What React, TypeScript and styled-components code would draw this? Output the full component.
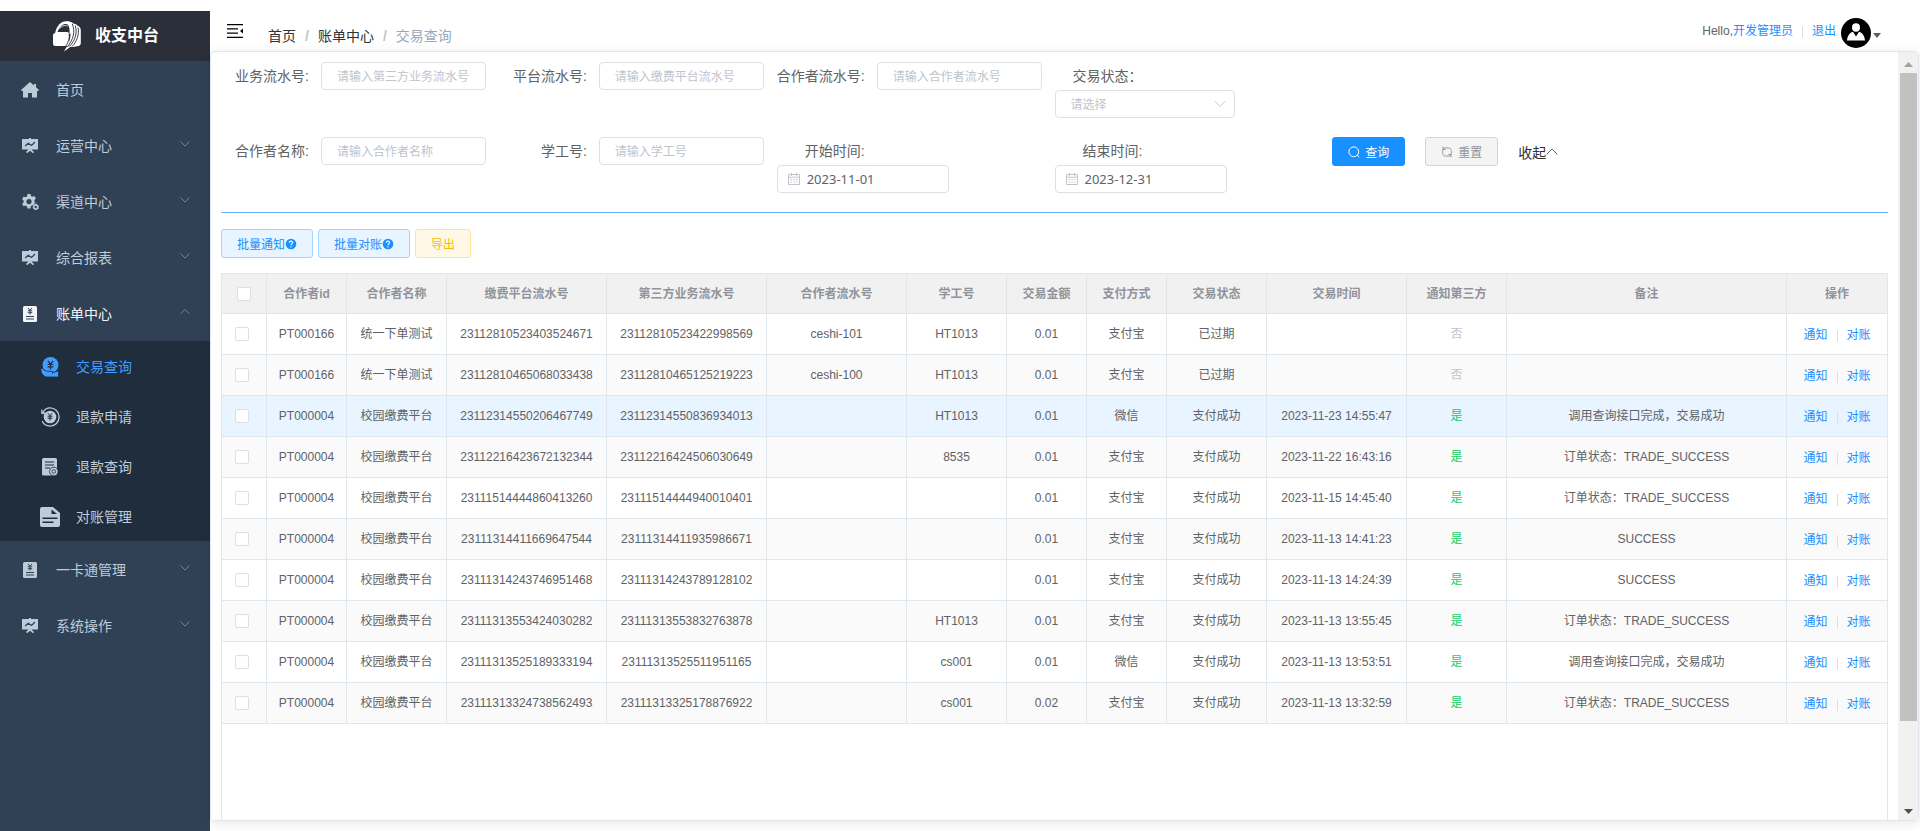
import React, { useState } from 'react';
import styled, { createGlobalStyle, css } from 'styled-components';

const latinFirst = `"Liberation Sans", "Noto Sans CJK SC", sans-serif`;
const uiFont = `"Noto Sans", "Noto Sans CJK SC", sans-serif`;

const GlobalStyle = createGlobalStyle`
  *, *::before, *::after { box-sizing: border-box; }
  body {
    margin: 0;
    background: #fff;
    color: #606266;
    font: 14px/20px ${latinFirst};
  }
  button, input, select { font-family: inherit; }
  a { text-decoration: none; }
`;

/* ---------- shell ---------- */

const Shell = styled.div`
  display: flex;
  height: 100vh;
  padding-top: 11px;
`;

const Sidebar = styled.aside`
  flex: 0 0 210px;
  background: #304156;
  overflow: hidden;
`;

const Brand = styled.div`
  display: flex;
  align-items: center;
  gap: 12px;
  height: 50px;
  padding-left: 53px;
  background: #2b2f3a;
  color: #fff;
  font-size: 16px;
  font-weight: bold;
`;

const Menu = styled.ul`
  margin: 0;
  padding: 0;
  list-style: none;
`;

const SubMenu = styled(Menu)`
  background: #1f2d3d;
`;

const MenuLink = styled.a<{ $nested?: boolean; $tone?: string }>`
  display: flex;
  align-items: center;
  height: ${p => (p.$nested ? 50 : 56)}px;
  padding: 2px 20px 0 ${p => (p.$nested ? 40 : 20)}px;
  color: ${p => p.$tone ?? '#bfcbd9'};
  font-size: 14px;
  & > svg { margin-bottom: 4px; }
`;

const MenuIcon = styled.span`
  display: flex;
  align-items: center;
  justify-content: center;
  width: 20px;
  margin-right: 16px;
`;

const MenuText = styled.span`
  flex: 1;
`;

const Main = styled.div`
  flex: 1;
  min-width: 0;
  display: flex;
  flex-direction: column;
  padding: 0 1px 10px 0;
`;

const Header = styled.header`
  flex: 0 0 40px;
  display: flex;
  align-items: center;
  padding-left: 17px;
`;

const IconButton = styled.button`
  display: flex;
  margin: 0;
  padding: 0;
  border: 0;
  background: none;
  color: #000;
  cursor: pointer;
`;

const Crumbs = styled.nav`
  display: flex;
  margin: 10px 0 0 25px;
`;

const Crumb = styled.a<{ $current?: boolean }>`
  color: ${p => (p.$current ? '#97a8be' : '#303133')};
  &:not(:first-child)::before {
    content: '/';
    margin: 0 9px;
    color: #c0c4cc;
    font-weight: bold;
  }
`;

const Account = styled.div`
  display: flex;
  align-items: center;
  margin-left: auto;
  padding-right: 38px;
  font-size: 12px;
`;

const TextLink = styled.a`
  color: #1890ff;
`;

const Bar = styled.span`
  width: 1px;
  height: 12px;
  margin: 2px 9px 0;
  background: #dcdfe6;
`;

const AvatarMenu = styled(IconButton)`
  align-items: center;
  gap: 2px;
  margin: 4px 0 0 5px;
  & > svg:last-child { margin-top: 4px; }
`;

/* ---------- content card ---------- */

const Card = styled.main`
  flex: 1;
  min-height: 0;
  display: flex;
  border: 1px solid #dfe6f0;
  border-radius: 4px;
  box-shadow: 0 2px 12px rgba(0, 0, 0, 0.1);
  overflow: hidden;
`;

const Page = styled.div`
  flex: 1;
  min-width: 0;
  display: flex;
  flex-direction: column;
  padding: 10px 10px 0;
  overflow: hidden;
`;

const ScrollTrack = styled.div`
  flex: 0 0 20px;
  display: flex;
  flex-direction: column;
  align-items: center;
  background: #f1f1f1;
`;

const ScrollArrow = styled.span`
  flex: 0 0 21px;
  display: flex;
  align-items: center;
  padding-top: 3px;
`;

const ScrollThumb = styled.span`
  flex: 649 0 0;
  width: 17px;
  background: #c1c1c1;
`;

const ScrollRest = styled.span`
  flex: 78 0 0;
`;

/* ---------- filter form ---------- */

const Filters = styled.form`
  display: grid;
  grid-template-columns: repeat(6, 1fr);
  row-gap: 19px;
  padding-bottom: 19px;
  border-bottom: 1px solid #66b1ff;
`;

const Field = styled.div<{ $stacked?: boolean }>`
  display: flex;
  flex-direction: ${p => (p.$stacked ? 'column' : 'row')};
  align-items: flex-start;
  height: 56px;
`;

const FieldLabel = styled.label`
  flex: none;
  width: 100px;
  height: 28px;
  padding-right: 12px;
  text-align: right;
  white-space: nowrap;
  line-height: 28px;
`;

const controlBox = css`
  height: 28px;
  border: 1px solid #dcdfe6;
  border-radius: 4px;
  background: #fff;
  color: #606266;
`;

const TextInput = styled.input`
  ${controlBox}
  width: 165px;
  padding: 2px 15px 0;
  font-size: 12px;
  &::placeholder { color: #c0c4cc; }
`;

const SelectWrap = styled.div`
  display: grid;
  align-items: center;
  width: 180px;
  & > * { grid-area: 1 / 1; }
  & > svg { justify-self: end; margin-right: 9px; pointer-events: none; }
`;

const SelectInput = styled.select`
  ${controlBox}
  width: 100%;
  padding: 2px 15px 0;
  color: #c0c4cc;
  font-size: 12px;
  appearance: none;
`;

const DateWrap = styled.div`
  ${controlBox}
  display: flex;
  align-items: center;
  gap: 7px;
  width: 172px;
  padding: 0 10px;
`;

const DateInput = styled.input`
  flex: 1;
  min-width: 0;
  padding: 0;
  border: 0;
  outline: 0;
  background: none;
  color: #606266;
  font-size: 13px;
  font-family: ${uiFont};
`;

const FormActions = styled.div`
  grid-column: span 2;
  display: flex;
  align-items: flex-start;
`;

const tones = {
  primary: ['#1890ff', '#1890ff', '#fff'],
  info: ['#f4f4f5', '#d3d4d6', '#909399'],
  soft: ['#e8f4ff', '#a3d3ff', '#1890ff'],
  warning: ['#fff8e6', '#ffe399', '#ffba00'],
};

const Button = styled.button<{ $tone: keyof typeof tones }>`
  display: inline-flex;
  align-items: center;
  gap: 5px;
  height: 29px;
  padding: 0 15px;
  border: 1px solid ${p => tones[p.$tone][1]};
  border-radius: 3px;
  background: ${p => tones[p.$tone][0]};
  color: ${p => tones[p.$tone][2]};
  font-size: 12px;
  white-space: nowrap;
  cursor: pointer;
`;

const TightButton = styled(Button)`
  gap: 0;
`;

const ResetButton = styled(Button)`
  margin: 0 20px;
`;

const Collapse = styled(IconButton)`
  align-items: center;
  height: 29px;
  color: #303133;
  font-size: 14px;
`;

const Toolbar = styled.div`
  display: flex;
  gap: 5px;
  padding: 16px 0 15px;
`;

/* ---------- table ---------- */

const TableFrame = styled.div`
  flex: 1;
  min-height: 0;
  border: solid #dfe6ec;
  border-width: 1px 1px 0;
  overflow: hidden;
`;

const Table = styled.table`
  width: 100%;
  table-layout: fixed;
  border-collapse: separate;
  border-spacing: 0;
  font-size: 12px;
  text-align: center;
`;

const cell = css`
  padding: 0;
  border: solid #dfe6ec;
  border-width: 0 1px 1px 0;
  white-space: nowrap;
  &:last-child { border-right: 0; }
`;

const Th = styled.th`
  ${cell}
  height: 40px;
  background: #f1f1f1;
  color: #909399;
`;

const Td = styled.td`
  ${cell}
  height: 41px;
`;

const Tr = styled.tr<{ $active?: boolean }>`
  background: #fff;
  &:nth-child(even) { background: #fafafa; }
  ${p => p.$active && css`&& { background: #e8f4ff; }`}
`;

const Check = styled.input`
  display: block;
  width: 14px;
  height: 14px;
  margin: 0 auto;
  border: 1px solid #dcdfe6;
  border-radius: 2px;
  background: #fff;
  appearance: none;
  &:checked { background: #1890ff; }
`;

const CheckCell = styled(Td)`
  padding-right: 4px;
`;

const Flag = styled.span<{ $on: boolean }>`
  color: ${p => (p.$on ? '#13ce66' : '#c0c4cc')};
`;

const RowActions = styled.div`
  display: flex;
  align-items: center;
  justify-content: center;
  padding-top: 2px;
`;

/* ---------- icons ---------- */

const Logo = () => (
  <svg width="30" height="32" viewBox="0 0 30 32" fill="none">
    <path d="M2 13C4 5 8 1.500 13 1.200c4-.2 7 2.500 7.500 7.800L17 14z" fill="#fff" />
    <path d="M4.500 12C7 6 10 3.800 13 4c3 .3 4 4 3.500 10.500C16 12.500 15 12 13.500 12z" fill="#2b2f3a" />
    <path d="M7 8.500C9 5.500 12 5 14.500 6" stroke="#fff" strokeWidth="0.900" />
    <path d="M0 15.500A2.500 2.500 0 0 1 2.500 13H13q3 0 3 3v10H2.500A2.500 2.500 0 0 1 0 23.500z" fill="#fff" />
    <path d="M14 1.300c3 0 5 1 6 2.200 2.500 0 4 1.200 4.500 2.300 2 .6 3 2 3.300 4V23c0 2-1 3-4 3.300-3 .8-5 .8-6.500.8L11 31.500c4-6.500 7-12.500 6.500-19.500C17 6 16 4 13 3z" fill="#fff" />
    <path d="M16.500 14c0 5-1.500 9-3.500 12M19.300 4c3 7 1.500 15-5 23M22.300 5.500c2.200 7.500 0 15-6 21M25 7.500c1.400 7-1 14-6 19" stroke="#2b2f3a" strokeWidth="0.900" />
  </svg>
);

const HomeIcon = () => (
  <svg width="18" height="16" viewBox="0 0 18 16" fill="currentColor">
    <path d="M9 0 0 8l.8 1H2v6.500h5V11h4v4.500h5V9h1.200L18 8l-3-2.700V2h-2v1.600z" />
  </svg>
);

const BoardIcon = () => (
  <svg width="16" height="16" viewBox="0 0 16 16" fill="none">
    <path d="M7 0h2v1h7v10.500H9.500l2.500 2.500-1 1.200-3-2.400-3 2.400L4 14l2.500-2.500H0V1h7z" fill="currentColor" />
    <path d="m3 8 3.200-2.700L9.500 7.500 13 4" stroke="#304156" strokeWidth="1.200" />
  </svg>
);

const GearIcon = () => (
  <svg width="17" height="16" viewBox="0 0 17 16" fill="currentColor" fillRule="evenodd">
    <path d="M5.500 0h3l.4 2 1.500.8 2-.7 1.500 2.500-1.500 1.400v1.800l1 .9-1.500 1.100-.2 1.700-1.400-.2-1.400.7-.4 2.500h-3l-.5-2.100-1.400-.8-2 .6L.1 9.800 1.600 8.400V6.600L.1 5.200 1.600 2.600l2 .6L5 2.400zM7 5a2.600 2.600 0 1 0 0 5.200A2.600 2.600 0 0 0 7 5z" />
    <path d="M13 9.800h1.800l.3 1 1 .1.900 1.500-.6.700.4.800-.9 1.500-1.100-.1-.6.700h-1.500l-.5-1-1-.2-.6-1.500.7-.8-.2-1 1-1.300 1 .2zm.7 2a1.200 1.200 0 1 0 0 2.400 1.200 1.200 0 0 0 0-2.400z" />
  </svg>
);

const BillIcon = () => (
  <svg width="14" height="16" viewBox="0 0 14 16" fill="none">
    <rect width="14" height="16" rx="1.500" fill="currentColor" />
    <path d="m5 2 2 2.300L9 2M7 4.300V8.500M4.800 4.800h4.400M4.800 6.700h4.400M3 10.500h8M3 13h8" stroke="#304156" strokeWidth="1" />
  </svg>
);

const HandCoinIcon = () => (
  <svg width="20" height="20" viewBox="0 0 20 20" fill="none">
    <circle cx="10.500" cy="8" r="8" fill="currentColor" />
    <path d="m7.800 3.800 2.700 3.400 2.700-3.400M10.500 7v5.500M7.600 7.500h5.800M7.600 9.900h5.800" stroke="#1f2d3d" strokeWidth="1.200" />
    <path d="M.8 11.500c1.200-.6 2.200.2 3.200 1.600l3.400 1.200H12c1.500 0 1.500 1.600 0 1.800l6.500-2.400V20H8C4 20 1 17.500.8 11.500z" fill="currentColor" stroke="#1f2d3d" strokeWidth="0.800" />
  </svg>
);

const RefundIcon = () => (
  <svg width="20" height="20" viewBox="0 0 20 20" fill="none">
    <circle cx="10" cy="10" r="6.300" fill="currentColor" />
    <path d="M1.500 6.500 5 6M2.800 5.500C4.500 2.500 7 .9 10 .9a9.100 9.100 0 0 1 0 18.200c-3.700 0-6.500-2-7.800-5M1.800 2.500v4" stroke="currentColor" strokeWidth="1.300" />
    <path d="m7.900 6.200 2.100 2.400 2.100-2.400M10 8.500v5M7.600 9.200h4.800M7.600 11.200h4.800" stroke="#1f2d3d" strokeWidth="1" />
  </svg>
);

const ReceiptIcon = () => (
  <svg width="18" height="18" viewBox="0 0 18 18" fill="none">
    <rect x="1" width="15" height="17.500" rx="1.500" fill="currentColor" />
    <path d="M4 4h9M4 7h9M4 10h5" stroke="#1f2d3d" strokeWidth="1" />
    <circle cx="12.800" cy="13.500" r="4.300" fill="currentColor" stroke="#1f2d3d" strokeWidth="0.800" />
    <circle cx="12.800" cy="13.500" r="1.800" stroke="#1f2d3d" strokeWidth="0.800" />
  </svg>
);

const DocumentIcon = () => (
  <svg width="20" height="20" viewBox="0 0 20 20" fill="none">
    <path d="M2 0h11l7 6v12a2 2 0 0 1-2 2H2a2 2 0 0 1-2-2V2a2 2 0 0 1 2-2z" fill="currentColor" />
    <path d="M11.500 2.500V7H17z" fill="#1f2d3d" />
    <path d="M2.500 11.200h15M2.500 15.300h11" stroke="#1f2d3d" strokeWidth="1.600" />
  </svg>
);

const Chevron = ({ up, color = '#909399', size = 10 }: { up?: boolean; color?: string; size?: number }) => (
  <svg width={size} height={size} viewBox="0 0 10 10" fill="none" stroke={color} strokeWidth="0.800">
    <path d={up ? 'M.5 7 5 2.500 9.500 7' : 'M.5 2.500 5 7l4.500-4.500'} />
  </svg>
);

const FoldIcon = () => (
  <svg width="16" height="14" viewBox="0 0 16 14" fill="currentColor">
    <path d="M0 0h16v1.300H0zM0 4.200h11v1.300H0zM0 8.400h11v1.300H0zM0 12.700h16V14H0zM16 4.500v5L13 7z" />
  </svg>
);

const Avatar = () => (
  <svg width="30" height="30" viewBox="0 0 30 30">
    <circle cx="15" cy="15" r="15" fill="#000" />
    <ellipse cx="15" cy="9.500" rx="4" ry="4.200" fill="#fff" />
    <path d="M6 22.500c.5-4.500 2.500-8 6-8.700l3 4.700 3-4.700c3.500.7 5.500 4.200 6 8.700z" fill="#fff" />
  </svg>
);

const Triangle = ({ up, color, width = 9 }: { up?: boolean; color: string; width?: number }) => (
  <svg width={width} height="5" viewBox="0 0 9 5" preserveAspectRatio="none" fill={color}>
    <path d={up ? 'M0 5 4.500 0 9 5z' : 'M0 0h9L4.500 5z'} />
  </svg>
);

const SearchIcon = () => (
  <svg width="12" height="12" viewBox="0 0 12 12" fill="none" stroke="currentColor">
    <circle cx="5.800" cy="5.800" r="4.900" />
    <path d="m9.200 9.200 2 2" />
  </svg>
);

const RefreshIcon = () => (
  <svg width="12" height="12" viewBox="0 0 12 12" fill="none" stroke="currentColor" strokeWidth="0.900">
    <path d="M1.700 7.500V4.500C1.700 3 2.500 2 4 1.900h3.500c1.700.1 2.600 1 2.700 2.600M10.300 5v2.500c0 1.500-.8 2.500-2.300 2.600H4.500C2.900 10 2 9.200 1.800 7.800M2 .8v2.700h2.700M10 11.200V8.500H7.300" />
  </svg>
);

const HelpIcon = () => (
  <svg width="12" height="12" viewBox="0 0 12 12" fill="none">
    <circle cx="6" cy="6" r="5.300" fill="currentColor" />
    <path d="M4.300 4.700C4.300 2.600 7.700 2.600 7.700 4.600 7.700 5.800 6 5.800 6 7.200M6 8.200v1.200" stroke="#fff" strokeWidth="1.100" />
  </svg>
);

const CalendarIcon = () => (
  <svg width="12" height="12" viewBox="0 0 12 12" fill="none" stroke="#c0c4cc">
    <path d="M.5 1.500h11v10H.5zM.5 4.200h11M3.500 0v3M8.500 0v3M2.500 6.500h1.500M5.300 6.500h1.500M8 6.500h1.500M2.500 9h1.500M5.300 9h1.500M8 9h1.500" />
  </svg>
);

/* ---------- data ---------- */

type Item = { text: string; icon: React.ReactNode; arrow?: 'up' | 'down'; tone?: string; children?: Item[] };

const menu: Item[] = [
  { text: '首页', icon: <HomeIcon /> },
  { text: '运营中心', icon: <BoardIcon />, arrow: 'down' },
  { text: '渠道中心', icon: <GearIcon />, arrow: 'down' },
  { text: '综合报表', icon: <BoardIcon />, arrow: 'down' },
  {
    text: '账单中心', icon: <BillIcon />, arrow: 'up', tone: '#f4f4f5',
    children: [
      { text: '交易查询', icon: <HandCoinIcon />, tone: '#409eff' },
      { text: '退款申请', icon: <RefundIcon /> },
      { text: '退款查询', icon: <ReceiptIcon /> },
      { text: '对账管理', icon: <DocumentIcon /> },
    ],
  },
  { text: '一卡通管理', icon: <BillIcon />, arrow: 'down' },
  { text: '系统操作', icon: <BoardIcon />, arrow: 'down' },
];

const columns: [string, number?][] = [
  ['合作者id', 80], ['合作者名称', 100], ['缴费平台流水号', 160], ['第三方业务流水号', 160],
  ['合作者流水号', 140], ['学工号', 100], ['交易金额', 80], ['支付方式', 80], ['交易状态', 100],
  ['交易时间', 140], ['通知第三方', 100], ['备注'], ['操作', 100],
];

const TRADE = '订单状态：TRADE_SUCCESS';
const DONE = '调用查询接口完成，交易成功';
const TEST = '统一下单测试';
const CAMPUS = '校园缴费平台';

const rows: string[][] = [
  ['PT000166', TEST, '23112810523403524671', '23112810523422998569', 'ceshi-101', 'HT1013', '0.01', '支付宝', '已过期', '', '否', ''],
  ['PT000166', TEST, '23112810465068033438', '23112810465125219223', 'ceshi-100', 'HT1013', '0.01', '支付宝', '已过期', '', '否', ''],
  ['PT000004', CAMPUS, '23112314550206467749', '23112314550836934013', '', 'HT1013', '0.01', '微信', '支付成功', '2023-11-23 14:55:47', '是', DONE],
  ['PT000004', CAMPUS, '23112216423672132344', '23112216424506030649', '', '8535', '0.01', '支付宝', '支付成功', '2023-11-22 16:43:16', '是', TRADE],
  ['PT000004', CAMPUS, '23111514444860413260', '23111514444940010401', '', '', '0.01', '支付宝', '支付成功', '2023-11-15 14:45:40', '是', TRADE],
  ['PT000004', CAMPUS, '23111314411669647544', '23111314411935986671', '', '', '0.01', '支付宝', '支付成功', '2023-11-13 14:41:23', '是', 'SUCCESS'],
  ['PT000004', CAMPUS, '23111314243746951468', '23111314243789128102', '', '', '0.01', '支付宝', '支付成功', '2023-11-13 14:24:39', '是', 'SUCCESS'],
  ['PT000004', CAMPUS, '23111313553424030282', '23111313553832763878', '', 'HT1013', '0.01', '支付宝', '支付成功', '2023-11-13 13:55:45', '是', TRADE],
  ['PT000004', CAMPUS, '23111313525189333194', '23111313525511951165', '', 'cs001', '0.01', '微信', '支付成功', '2023-11-13 13:53:51', '是', DONE],
  ['PT000004', CAMPUS, '23111313324738562493', '23111313325178876922', '', 'cs001', '0.02', '支付宝', '支付成功', '2023-11-13 13:32:59', '是', TRADE],
];

/* ---------- parts ---------- */

const MenuList = ({ items, nested }: { items: Item[]; nested?: boolean }) => (
  <>
    {items.map(item => (
      <li key={item.text}>
        <MenuLink href="#" $nested={nested} $tone={item.tone}>
          <MenuIcon>{item.icon}</MenuIcon>
          <MenuText>{item.text}</MenuText>
          {item.arrow && <Chevron up={item.arrow === 'up'} />}
        </MenuLink>
        {item.children && <SubMenu><MenuList items={item.children} nested /></SubMenu>}
      </li>
    ))}
  </>
);

const TextField = ({ id, label, hint }: { id: string; label: string; hint: string }) => (
  <Field>
    <FieldLabel htmlFor={id}>{label}</FieldLabel>
    <TextInput id={id} placeholder={hint} />
  </Field>
);

const DateField = ({ id, label, value }: { id: string; label: string; value: string }) => {
  const [date, setDate] = useState(value);
  return (
    <Field $stacked>
      <FieldLabel htmlFor={id}>{label}</FieldLabel>
      <DateWrap>
        <CalendarIcon />
        <DateInput id={id} value={date} onChange={e => setDate(e.target.value)} />
      </DateWrap>
    </Field>
  );
};

export default function App() {
  return (
    <>
      <GlobalStyle />
      <Shell>
        <Sidebar>
          <Brand><Logo />收支中台</Brand>
          <Menu><MenuList items={menu} /></Menu>
        </Sidebar>
        <Main>
          <Header>
            <IconButton aria-label="折叠菜单"><FoldIcon /></IconButton>
            <Crumbs>
              <Crumb href="#">首页</Crumb>
              <Crumb href="#">账单中心</Crumb>
              <Crumb href="#" $current>交易查询</Crumb>
            </Crumbs>
            <Account>
              Hello,<TextLink href="#">开发管理员</TextLink>
              <Bar />
              <TextLink href="#">退出</TextLink>
              <AvatarMenu aria-label="账户菜单"><Avatar /><Triangle color="#5a5e66" width={8} /></AvatarMenu>
            </Account>
          </Header>
          <Card>
            <Page>
              <Filters onSubmit={e => e.preventDefault()}>
                <TextField id="biz" label="业务流水号:" hint="请输入第三方业务流水号" />
                <TextField id="platform" label="平台流水号:" hint="请输入缴费平台流水号" />
                <TextField id="partner" label="合作者流水号:" hint="请输入合作者流水号" />
                <Field $stacked>
                  <FieldLabel htmlFor="status">交易状态：</FieldLabel>
                  <SelectWrap>
                    <SelectInput id="status"><option>请选择</option></SelectInput>
                    <Chevron color="#c0c4cc" size={12} />
                  </SelectWrap>
                </Field>
                <span />
                <span />
                <TextField id="name" label="合作者名称:" hint="请输入合作者名称" />
                <TextField id="person" label="学工号:" hint="请输入学工号" />
                <DateField id="from" label="开始时间:" value="2023-11-01" />
                <DateField id="to" label="结束时间:" value="2023-12-31" />
                <FormActions>
                  <Button $tone="primary" type="submit"><SearchIcon />查询</Button>
                  <ResetButton $tone="info" type="reset"><RefreshIcon />重置</ResetButton>
                  <Collapse type="button">收起<Chevron up color="#606266" size={12} /></Collapse>
                </FormActions>
              </Filters>
              <Toolbar>
                <TightButton $tone="soft">批量通知<HelpIcon /></TightButton>
                <TightButton $tone="soft">批量对账<HelpIcon /></TightButton>
                <TightButton $tone="warning">导出</TightButton>
              </Toolbar>
              <TableFrame>
                <Table>
                  <colgroup>
                    <col width={45} />
                    {columns.map(([name, width]) => <col key={name} width={width} />)}
                  </colgroup>
                  <thead>
                    <tr>
                      <Th><Check type="checkbox" aria-label="全选" /></Th>
                      {columns.map(([name]) => <Th key={name}>{name}</Th>)}
                    </tr>
                  </thead>
                  <tbody>
                    {rows.map((row, i) => (
                      <Tr key={row[2]} $active={i === 2}>
                        <CheckCell><Check type="checkbox" aria-label={`选择 ${row[2]}`} /></CheckCell>
                        {row.map((value, c) => (
                          <Td key={c}>{c === 10 ? <Flag $on={value === '是'}>{value}</Flag> : value}</Td>
                        ))}
                        <Td>
                          <RowActions>
                            <TextLink href="#">通知</TextLink>
                            <Bar />
                            <TextLink href="#">对账</TextLink>
                          </RowActions>
                        </Td>
                      </Tr>
                    ))}
                  </tbody>
                </Table>
              </TableFrame>
            </Page>
            <ScrollTrack aria-hidden>
              <ScrollArrow><Triangle up color="#a3a3a3" /></ScrollArrow>
              <ScrollThumb />
              <ScrollRest />
              <ScrollArrow><Triangle color="#505050" /></ScrollArrow>
            </ScrollTrack>
          </Card>
        </Main>
      </Shell>
    </>
  );
}
